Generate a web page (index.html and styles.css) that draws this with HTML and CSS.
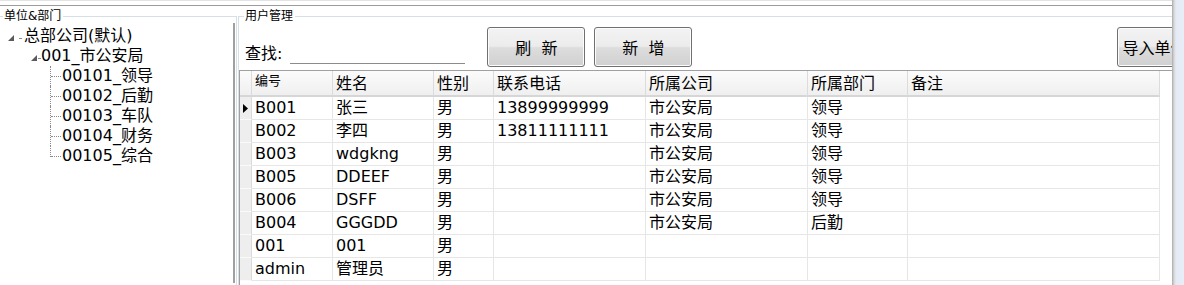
FILE: index.html
```html
<!DOCTYPE html>
<html lang="zh-CN">
<head>
    <meta charset="UTF-8">
    <title>用户管理</title>
    <link rel="stylesheet" href="styles.css">
</head>
<body>
    <div class="window">
        <div class="panes">
            <!-- 左侧：单位&部门树 -->
            <fieldset class="group group-left">
                <legend>单位&amp;部门</legend>
                <div class="tree">
                    <div class="node lvl1">
                        <svg class="exp" width="6" height="6" viewBox="0 0 6 6"><polygon points="6,0 6,6 0,6" fill="#5a5a5a"/></svg>
                        <span class="tick"></span>
                        <span>总部公司(默认)</span>
                    </div>
                    <div class="node lvl2">
                        <svg class="exp" width="6" height="6" viewBox="0 0 6 6"><polygon points="6,0 6,6 0,6" fill="#5a5a5a"/></svg>
                        <span class="tick"></span>
                        <span>001_市公安局</span>
                    </div>
                    <ul class="leaves">
                        <li><span class="stub"></span>00101_领导</li>
                        <li><span class="stub"></span>00102_后勤</li>
                        <li><span class="stub"></span>00103_车队</li>
                        <li><span class="stub"></span>00104_财务</li>
                        <li class="last"><span class="stub"></span>00105_综合</li>
                    </ul>
                </div>
            </fieldset>

            <!-- 右侧：用户管理 -->
            <fieldset class="group group-right">
                <legend>用户管理</legend>
                <div class="toolbar">
                    <div class="search">
                        <label for="q">查找:</label>
                        <input id="q" class="search-input" type="text">
                    </div>
                    <button class="btn btn-refresh">刷 新</button>
                    <button class="btn btn-add">新 增</button>
                    <button class="btn btn-import">导入单位</button>
                </div>
                <div class="grid-wrap">
                    <table class="grid">
                        <colgroup>
                            <col class="c-sel"><col class="c-no"><col class="c-name"><col class="c-sex">
                            <col class="c-tel"><col class="c-com"><col class="c-dep"><col class="c-memo">
                        </colgroup>
                        <thead>
                            <tr>
                                <th></th>
                                <th class="small">编号</th>
                                <th>姓名</th>
                                <th>性别</th>
                                <th>联系电话</th>
                                <th>所属公司</th>
                                <th>所属部门</th>
                                <th>备注</th>
                            </tr>
                        </thead>
                        <tbody>
                            <tr>
                                <td class="sel"><svg width="5" height="9" viewBox="0 0 5 9"><polygon points="0,0 5,4.5 0,9" fill="#000"/></svg></td>
                                <td>B001</td><td>张三</td><td>男</td><td>13899999999</td><td>市公安局</td><td>领导</td><td></td>
                            </tr>
                            <tr>
                                <td class="sel"></td>
                                <td>B002</td><td>李四</td><td>男</td><td>13811111111</td><td>市公安局</td><td>领导</td><td></td>
                            </tr>
                            <tr>
                                <td class="sel"></td>
                                <td>B003</td><td>wdgkng</td><td>男</td><td></td><td>市公安局</td><td>领导</td><td></td>
                            </tr>
                            <tr>
                                <td class="sel"></td>
                                <td>B005</td><td>DDEEF</td><td>男</td><td></td><td>市公安局</td><td>领导</td><td></td>
                            </tr>
                            <tr>
                                <td class="sel"></td>
                                <td>B006</td><td>DSFF</td><td>男</td><td></td><td>市公安局</td><td>领导</td><td></td>
                            </tr>
                            <tr>
                                <td class="sel"></td>
                                <td>B004</td><td>GGGDD</td><td>男</td><td></td><td>市公安局</td><td>后勤</td><td></td>
                            </tr>
                            <tr>
                                <td class="sel"></td>
                                <td>001</td><td>001</td><td>男</td><td></td><td></td><td></td><td></td>
                            </tr>
                            <tr>
                                <td class="sel"></td>
                                <td>admin</td><td>管理员</td><td>男</td><td></td><td></td><td></td><td></td>
                            </tr>
                        </tbody>
                    </table>
                </div>
            </fieldset>
        </div>
    </div>
    <div class="edge"></div>
</body>
</html>
```

FILE: styles.css
```css
body {
    margin: 0;
    width: 1184px;
    height: 285px;
    overflow: hidden;
    display: flex;
    background-color: #fff;
    font-family: "DejaVu Sans", "Noto Sans CJK SC", sans-serif;
    color: #000;
}

.window {
    width: 1172px;
    height: 285px;
    overflow: hidden;
    box-sizing: border-box;
    border-top: 1px solid #e3e3e3;
    padding-top: 4px;
}

/* 窗口右侧边缘 */
.edge {
    width: 12px;
    height: 285px;
    background: linear-gradient(to right, #a9a9a9 0, #d6d6d6 2px, #e4ebf5 4px, #e8eef8 100%);
}

.panes {
    display: flex;
    border-top: 1px solid #9c9c9c;
    height: 280px;
}

.group {
    margin: 3px 0 0 0;
    padding: 0;
    min-width: 0;
    border: 1px solid #d5dfe5;
    box-sizing: border-box;
}

.group legend {
    font-size: 12px;
    line-height: 14px;
    padding: 0 2px 0 1px;
}

.group-left {
    width: 237px;
    flex: none;
    border-left: none;
    border-bottom: none;
}

.group-left legend {
    margin-left: 3px;
}

.group-right {
    width: 960px;
    flex: none;
    margin-left: 1px;
    border-right: none;
    border-bottom: none;
}

.group-right legend {
    margin-left: 5px;
}

/* 树 */
.tree {
    width: 235px;
    height: 260px;
    box-sizing: border-box;
    border-right: 2px solid #a0a0a0;
    padding-top: 3px;
    font-size: 16px;
}

.node {
    display: flex;
    align-items: center;
    height: 20px;
    line-height: 20px;
    white-space: nowrap;
}

.lvl1 {
    padding-left: 8px;
}

.lvl2 {
    padding-left: 31px;
}

.exp {
    flex: none;
    margin-top: 4px;
}

.tick {
    width: 2px;
    margin: 4px 3px 0 5px;
    border-top: 1px dotted #8a8a8a;
}

.lvl2 .tick {
    margin: 4px 1px 0 1px;
}

.leaves {
    list-style: none;
    margin: 0 0 0 50px;
    padding: 0;
}

.leaves li {
    display: flex;
    height: 20px;
    line-height: 20px;
    white-space: nowrap;
}

.stub {
    width: 12px;
    height: 20px;
    flex: none;
    box-sizing: border-box;
    border-left: 1px dotted #8a8a8a;
}

.stub::after {
    content: "";
    display: block;
    width: 10px;
    height: 11px;
    border-bottom: 1px dotted #8a8a8a;
    box-sizing: border-box;
}

.leaves .last .stub {
    height: 11px;
}

/* 工具栏 */
.toolbar {
    display: flex;
    align-items: flex-start;
    height: 47px;
    box-sizing: border-box;
    padding: 4px 0 0 6px;
}

.search {
    display: flex;
    align-items: flex-end;
    align-self: flex-end;
    margin-bottom: 6px;
}

.search label {
    font-size: 16px;
    line-height: 20px;
    margin-right: 8px;
}

.search-input {
    width: 175px;
    height: 20px;
    box-sizing: border-box;
    border: none;
    border-bottom: 1px solid #8c8c8c;
    padding: 0;
    outline: none;
    background: transparent;
}

.btn {
    flex: none;
    width: 98px;
    height: 40px;
    border: 1px solid #707070;
    border-radius: 3px;
    background: linear-gradient(#f3f3f3 0%, #ececec 48%, #dddddd 52%, #d0d0d0 100%);
    box-shadow: inset 0 0 0 1px #fcfcfc;
    font-family: "DejaVu Sans", "Noto Sans CJK SC", sans-serif;
    font-size: 16px;
    word-spacing: 5px;
    color: #000;
    padding: 0;
}

.btn-refresh {
    margin-left: 22px;
}

.btn-add {
    margin-left: 9px;
}

.btn-import {
    width: 80px;
    margin-left: 425px;
    text-align: left;
    padding-left: 4px;
    word-spacing: 0;
}

/* 表格 */
.grid-wrap {
    height: 220px;
    border-left: 1px solid #a0a0a0;
    border-top: 1px solid #a0a0a0;
}

.grid {
    table-layout: fixed;
    width: 920px;
    border-collapse: separate;
    border-spacing: 0;
    font-size: 16px;
}

.c-sel { width: 12px; }
.c-no { width: 81px; }
.c-name { width: 101px; }
.c-sex { width: 60px; }
.c-tel { width: 152px; }
.c-com { width: 162px; }
.c-dep { width: 100px; }
.c-memo { width: 252px; }

.grid th {
    height: 23px;
    padding: 0 0 0 3px;
    text-align: left;
    font-weight: normal;
    line-height: 23px;
    white-space: nowrap;
    overflow: hidden;
    background: linear-gradient(#fbfbfb, #efefef);
    border-right: 1px solid #dcdcdc;
    border-bottom: 2px solid #d6d6d6;
}

.grid th.small {
    font-size: 13px;
    vertical-align: top;
    line-height: 18px;
    padding-top: 1px;
}

.grid td {
    height: 22px;
    padding: 0 0 0 3px;
    line-height: 22px;
    white-space: nowrap;
    overflow: hidden;
    border-right: 1px solid #e6e6e6;
    border-bottom: 1px solid #e6e6e6;
}

.grid td.sel {
    padding: 0;
    background-color: #eeeeee;
    border-right: 1px solid #dadada;
    border-bottom: 1px solid #fafafa;
    text-align: center;
}

.grid td.sel svg {
    display: block;
    margin: 0 0 0 3px;
}
```
